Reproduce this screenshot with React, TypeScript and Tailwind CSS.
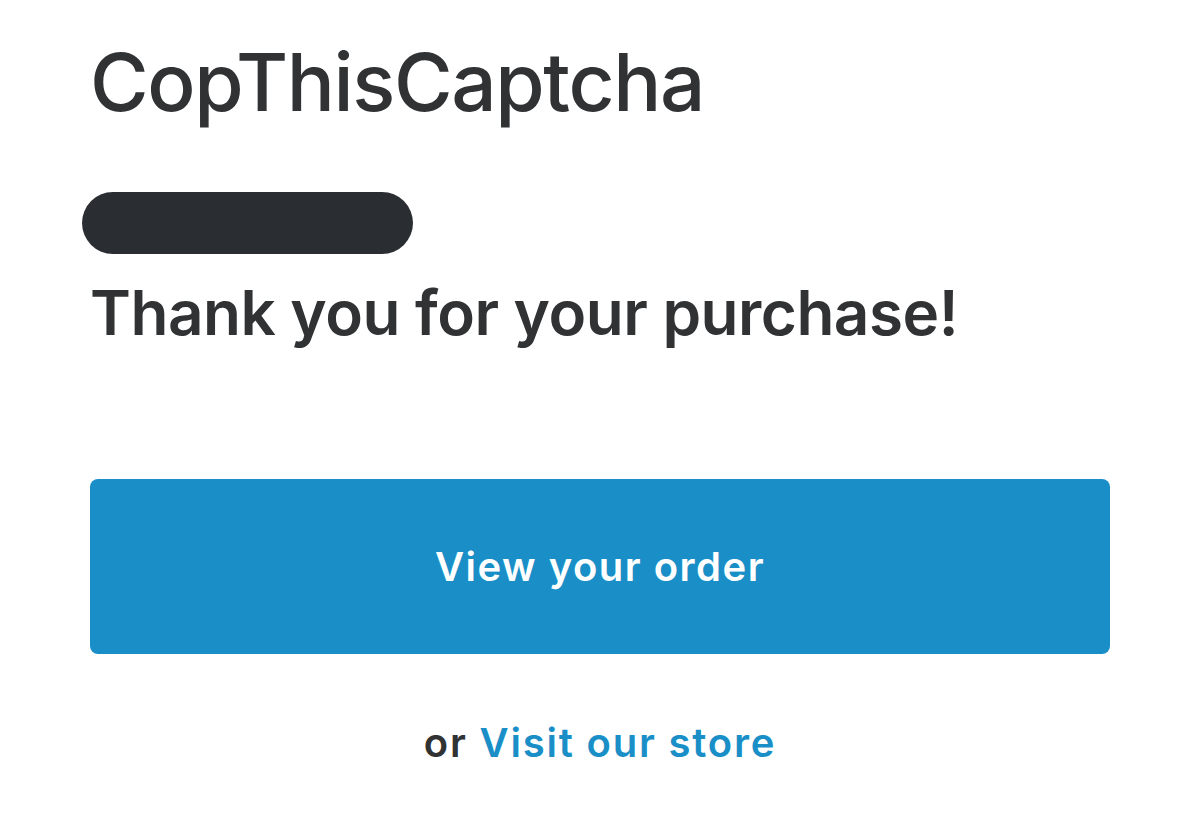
export default function App() {
  return (
    <div className="min-h-[815px] w-full bg-white font-['Inter','Liberation_Sans',sans-serif] text-[#303233]">
      <div className="flex flex-col px-[90px] pt-[42px]">
        <h1 className="text-[80px] font-medium leading-none tracking-[-1.4px]">CopThisCaptcha</h1>
        <div className="-ml-2 mt-[70px] h-[62px] w-[331px] rounded-full bg-[#2a2e33]" />
        <p className="mt-[28px] text-[62px] font-semibold leading-none tracking-[-0.5px]">
          Thank you for your purchase!
        </p>
        <button className="mt-[135px] flex h-[175px] w-full items-center justify-center rounded-[8px] bg-[#1a8fc7] text-[40px] font-semibold tracking-[1.5px] text-white">
          View your order
        </button>
        <p className="mt-[69px] text-center text-[40px] font-semibold leading-none tracking-[1.8px]">
          or <a className="text-[#1a8fc7]">Visit our store</a>
        </p>
      </div>
    </div>
  );
}
